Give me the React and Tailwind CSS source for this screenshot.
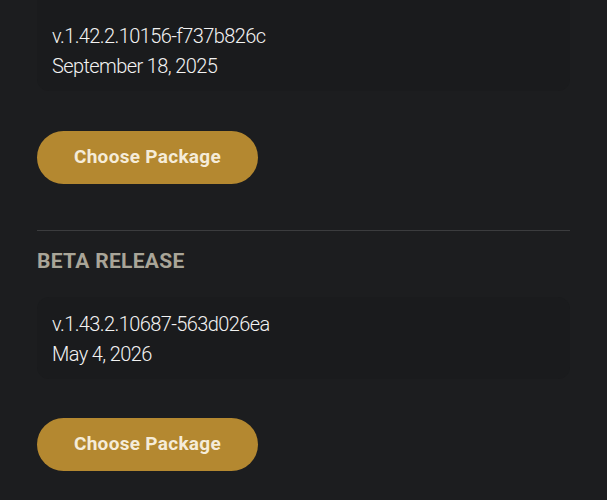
import React from "react";

const releases = [
  { label: null, version: "v.1.42.2.10156-f737b826c", date: "September 18, 2025" },
  { label: "BETA RELEASE", version: "v.1.43.2.10687-563d026ea", date: "May 4, 2026" },
];

const ReleaseCard = ({ version, date, first }) => (
  <div
    className={`rounded-xl bg-[#1a1b1d] px-[15px] pb-[10px] ${
      first ? "-mt-3 pt-[33px]" : "mt-[22px] pt-3"
    }`}
  >
    <div className="text-[20px] leading-[30px] font-light tracking-[-0.6px] text-[#f2f2f2]">{version}</div>
    <div className="text-[20px] leading-[30px] font-light tracking-[-0.6px] text-[#f2f2f2]">{date}</div>
  </div>
);

const ChooseButton = ({ mt }) => (
  <button
    type="button"
    className={`${mt} w-[221px] h-[53px] rounded-full bg-[#b48830] text-[19px] font-bold tracking-[0.3px] text-[#f5ecd9] flex items-center justify-center`}
  >
    Choose Package
  </button>
);

export default function App() {
  return (
    <div
      className="min-h-[500px] w-full bg-[#1c1d1f] px-[37px] overflow-hidden"
      style={{ fontFamily: "Roboto, 'Liberation Sans', sans-serif" }}
    >
      <ReleaseCard version={releases[0].version} date={releases[0].date} first />
      <ChooseButton mt="mt-10" />

      <div className="mt-[46px] h-px bg-[#3b3c3e]" />

      <div className="mt-4 text-[21px] leading-[28px] font-bold tracking-[0.3px] text-[#a9a598]">
        {releases[1].label}
      </div>
      <ReleaseCard version={releases[1].version} date={releases[1].date} />
      <ChooseButton mt="mt-[39px]" />
    </div>
  );
}
